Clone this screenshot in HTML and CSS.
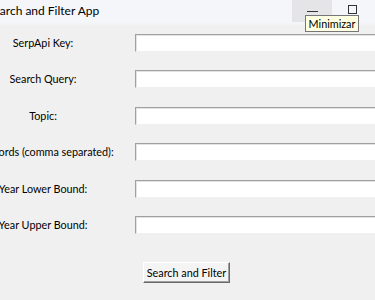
FILE: index.html
```html
<!DOCTYPE html>
<html lang="en">
<head>
  <meta charset="UTF-8">
  <meta name="viewport" content="width=device-width, initial-scale=1.0">
  <title>Search and Filter App</title>
  <link rel="stylesheet" href="styles.css">
</head>
<body>
  <div class="window">
    <div class="titlebar">
      <span class="title">Search and Filter App</span>
      <div class="caption">
        <button class="cap-btn hover" aria-label="Minimizar"><span class="min-glyph"></span></button>
        <button class="cap-btn" aria-label="Maximizar"><span class="max-glyph"></span></button>
      </div>
    </div>

    <!-- tooltip shown over the minimize button -->
    <div class="tooltip">Minimizar</div>

    <form class="form">
      <label class="label" for="apiKey">SerpApi Key:</label>
      <input class="entry" id="apiKey" type="text">

      <label class="label" for="query">Search Query:</label>
      <input class="entry" id="query" type="text">

      <label class="label" for="topic">Topic:</label>
      <input class="entry" id="topic" type="text">

      <label class="label" for="keywords">Keywords (comma separated):</label>
      <input class="entry" id="keywords" type="text">

      <label class="label" for="yearLow">Year Lower Bound:</label>
      <input class="entry" id="yearLow" type="text">

      <label class="label" for="yearHigh">Year Upper Bound:</label>
      <input class="entry" id="yearHigh" type="text">

      <button type="button" class="button">Search and Filter</button>
    </form>
  </div>
</body>
</html>
```

FILE: styles.css
```css
body {
  margin: 0;
  width: 375px;
  height: 300px;
  overflow: hidden;
  background-color: #f0f0f0;
  font-family: Lato, "Liberation Sans", sans-serif;
  font-size: 10.8px;
  color: #000;
}
.window {
  position: relative;
  height: 300px;
}
.titlebar {
  height: 26px;
  background: linear-gradient(#f5f6fa 0, #f5f6fa 22px, #f0f0f0 26px);
  display: flex;
  align-items: flex-start;
}
.title {
  margin-left: -13px;
  font-size: 12px;
  line-height: 22px;
  white-space: nowrap;
  flex: 1;
}
.caption {
  display: flex;
  margin-right: 3px;
}
.cap-btn {
  width: 40px;
  height: 22px;
  border: none;
  background: transparent;
  padding: 0;
  display: flex;
  align-items: center;
  justify-content: center;
}
.cap-btn.hover {
  background-color: #e5e5e7;
}
.min-glyph {
  width: 11px;
  height: 1px;
  background-color: #333;
  margin-top: 1px;
}
.max-glyph {
  width: 7px;
  height: 7px;
  border: 1px solid #333;
  margin-top: -4px;
}
.tooltip {
  position: absolute;
  left: 305px;
  top: 15px;
  width: 48px;
  height: 15px;
  padding: 0 2px;
  line-height: 15px;
  background-color: #ffffe1;
  border: 1px solid #767676;
  white-space: nowrap;
  text-align: center;
}
.form {
  display: grid;
  grid-template-columns: 174px 282px;
  column-gap: 5px;
  row-gap: 18.4px;
  margin-left: -44px;
  padding-top: 8px;
}
.label {
  text-align: center;
  align-self: center;
  white-space: nowrap;
  line-height: 18px;
}
.entry {
  box-sizing: border-box;
  height: 18px;
  margin: 0;
  padding: 0 2px;
  background-color: #fff;
  border-top: 1px solid #a0a0a0;
  border-left: 1px solid #a0a0a0;
  border-right: 1px solid #f0f0f0;
  border-bottom: 1px solid #f0f0f0;
  box-shadow: inset 1px 1px 0 #e3e3e3;
  font: inherit;
}
.button {
  grid-column: 1 / span 2;
  justify-self: center;
  margin-top: 9.6px;
  box-sizing: border-box;
  width: 87px;
  height: 21px;
  padding: 0;
  white-space: nowrap;
  background-color: #f4f4f4;
  border-top: 1px solid #fff;
  border-left: 1px solid #fff;
  border-right: 1px solid #696969;
  border-bottom: 1px solid #696969;
  box-shadow: inset -1px -1px 0 #a0a0a0;
  font: inherit;
  color: #000;
}
```
